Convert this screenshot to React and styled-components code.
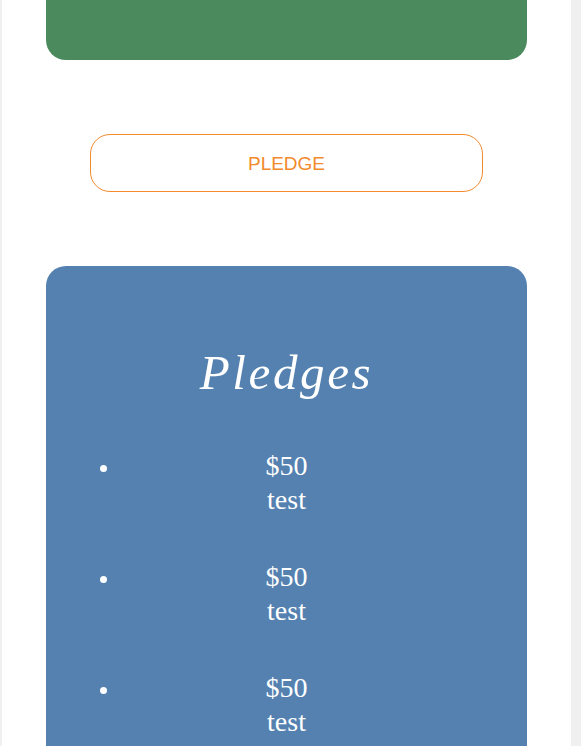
import React from 'react';
import styled, { createGlobalStyle } from 'styled-components';

const GlobalStyle = createGlobalStyle`
  html, body {
    margin: 0;
    padding: 0;
    background: #f0f0f0;
  }
`;

const Page = styled.div`
  width: 569px;
  margin-left: 2px;
  min-height: 746px;
  background: #ffffff;
  padding: 0 44px;
  box-sizing: border-box;
  display: flex;
  flex-direction: column;
  gap: 74px;
  overflow: hidden;
`;

const GoalCard = styled.div`
  height: 60px;
  background: #4a8a5c;
  border-radius: 0 0 20px 20px;
`;

const PledgeButton = styled.button`
  margin: 0 44px;
  height: 58px;
  padding: 2px 0 0;
  background: #ffffff;
  border: 1px solid #f28a2e;
  border-radius: 20px;
  color: #f28a2e;
  font-family: "Liberation Sans", Arial, sans-serif;
  font-size: 19px;
  cursor: pointer;
`;

const PledgesCard = styled.section`
  background: #5481b0;
  border-radius: 20px 20px 0 0;
  padding: 78px 0 40px;
  color: #ffffff;
  font-family: "Liberation Serif", "Times New Roman", serif;
`;

const Title = styled.h2`
  margin: 0;
  text-align: center;
  font-size: 49px;
  font-style: italic;
  font-weight: 400;
  letter-spacing: 2.6px;
  line-height: normal;
`;

const PledgeList = styled.ul`
  margin: 48px 0 0;
  padding: 0 74px;
  list-style: disc outside;
`;

const PledgeItem = styled.li`
  text-align: center;
  font-size: 28px;
  line-height: 34px;
  margin-bottom: 43px;

  &::marker {
    font-size: 22px;
  }
`;

const pledges = [
  { id: 1, amount: 50, comment: 'test' },
  { id: 2, amount: 50, comment: 'test' },
  { id: 3, amount: 50, comment: 'test' },
];

export default function App() {
  return (
    <>
      <GlobalStyle />
      <Page>
        <GoalCard />
        <PledgeButton type="button">PLEDGE</PledgeButton>
        <PledgesCard>
          <Title>Pledges</Title>
          <PledgeList>
            {pledges.map((p) => (
              <PledgeItem key={p.id}>
                ${p.amount}
                <br />
                {p.comment}
              </PledgeItem>
            ))}
          </PledgeList>
        </PledgesCard>
      </Page>
    </>
  );
}
